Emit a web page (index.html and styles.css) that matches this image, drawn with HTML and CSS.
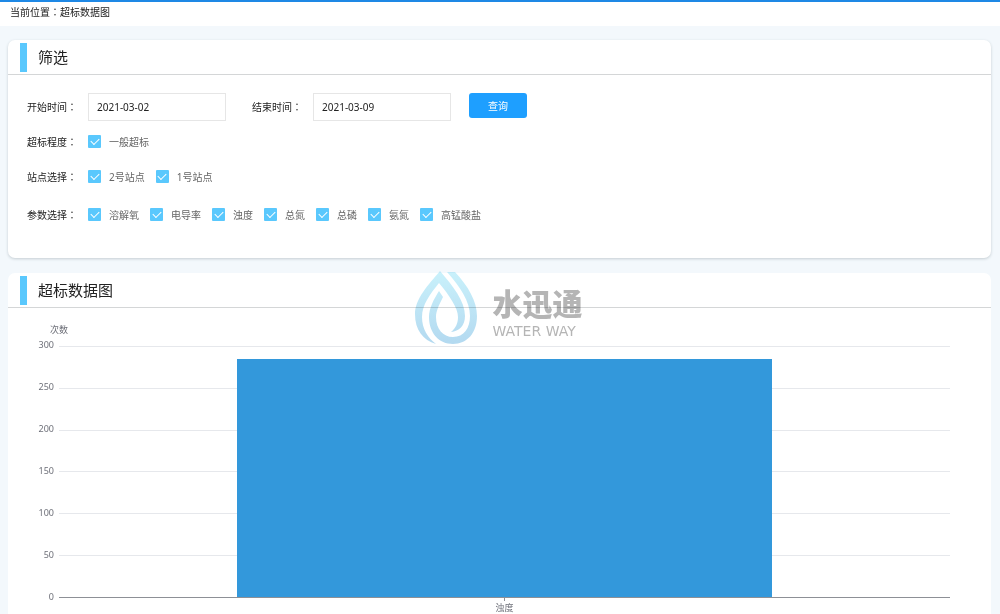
FILE: index.html
```html
<!DOCTYPE html>
<html lang="zh-CN">
<head>
<meta charset="utf-8">
<meta name="viewport" content="width=device-width, initial-scale=1">
<title>超标数据图</title>
<link rel="stylesheet" href="styles.css">
</head>
<body>
<nav class="crumbs">当前位置<span class="colon" lang="zh-Hant">：</span>超标数据图</nav>
<main class="page">
  <section class="card">
    <h2 class="card-title">筛选</h2>
    <form class="filters">
      <div class="row row-dates">
        <label class="name" for="start">开始时间<span class="colon" lang="zh-Hant">：</span></label>
        <input class="date" id="start" type="text" value="2021-03-02">
        <label class="name name-next" for="end">结束时间<span class="colon" lang="zh-Hant">：</span></label>
        <input class="date" id="end" type="text" value="2021-03-09">
        <button class="query" type="button">查询</button>
      </div>
      <div class="row" role="group" aria-labelledby="level">
        <span class="name" id="level">超标程度<span class="colon" lang="zh-Hant">：</span></span>
        <div class="options">
          <label class="option"><input class="check" type="checkbox" checked>一般超标</label>
        </div>
      </div>
      <div class="row" role="group" aria-labelledby="site">
        <span class="name" id="site">站点选择<span class="colon" lang="zh-Hant">：</span></span>
        <div class="options">
          <label class="option"><input class="check" type="checkbox" checked>2号站点</label>
          <label class="option"><input class="check" type="checkbox" checked>1号站点</label>
        </div>
      </div>
      <div class="row row-params" role="group" aria-labelledby="param">
        <span class="name" id="param">参数选择<span class="colon" lang="zh-Hant">：</span></span>
        <div class="options">
          <label class="option"><input class="check" type="checkbox" checked>溶解氧</label>
          <label class="option"><input class="check" type="checkbox" checked>电导率</label>
          <label class="option"><input class="check" type="checkbox" checked>浊度</label>
          <label class="option"><input class="check" type="checkbox" checked>总氮</label>
          <label class="option"><input class="check" type="checkbox" checked>总磷</label>
          <label class="option"><input class="check" type="checkbox" checked>氨氮</label>
          <label class="option"><input class="check" type="checkbox" checked>高锰酸盐</label>
        </div>
      </div>
    </form>
  </section>

  <section class="card card-chart">
    <h2 class="card-title">超标数据图</h2>
    <div class="chart">
      <div class="unit">次数</div>
      <div class="scale">
        <span>300</span><span>250</span><span>200</span><span>150</span><span>100</span><span>50</span><span>0</span>
      </div>
      <div class="plot">
        <div class="lines"><i></i><i></i><i></i><i></i><i></i><i></i></div>
        <div class="bar" style="height: 95%"></div>
      </div>
      <div class="category">浊度</div>
    </div>
    <div class="watermark">
      <svg class="drop" viewBox="0 0 62 74" aria-hidden="true">
        <defs>
          <linearGradient id="water" gradientUnits="userSpaceOnUse" x1="0" y1="0" x2="0" y2="74">
            <stop offset="0" stop-color="#c9f1fb"/>
            <stop offset="1" stop-color="#b3d9f0"/>
          </linearGradient>
        </defs>
        <path fill="url(#water)" d="M25 0C38 15 50 30 50 45C50 55 44 60 36 61C41 57 43 52 43 46C43 37 34 24 24 12C15 23 7 34 7 46C7 58 13 67 21 73C8 69 0 59 0 43C0 28 13 14 25 0Z"/>
        <path fill="url(#water)" d="M32 1H40C53 15 62 30 62 45C62 62 52 73 38 73C24 73 14 62 14 46C14 37 19 28 24 20L28 26C24 34 21 40 21 46C21 58 28 66 38 66C49 66 55 57 55 45C55 30 45 16 32 1Z"/>
      </svg>
      <div class="brand">
        <span class="brand-cn">水迅通</span>
        <span class="brand-en">WATER WAY</span>
      </div>
    </div>
  </section>
</main>
</body>
</html>
```
FILE: styles.css
```css
* {
  box-sizing: border-box;
}

body {
  margin: 0;
  background: #f3f8fc;
  color: #222;
  font: 10px/14px "Noto Sans", "Noto Sans CJK SC", sans-serif;
}

input,
button {
  margin: 0;
  font: inherit;
}

.crumbs {
  height: 26px;
  padding: 3px 10px 0;
  border-top: 2px solid #1e88e5;
  background: #fff;
}

.colon {
  font-family: "Noto Sans CJK TC", sans-serif;
  line-height: 1;
}

.page {
  display: flex;
  flex-direction: column;
  gap: 15px;
  padding: 14px 9px 0 8px;
}

.card {
  position: relative;
  border-radius: 7px;
  background: #fff;
  box-shadow: 0 1px 3px #c4cdd2;
}

.card-chart {
  border-radius: 7px 7px 0 0;
  box-shadow: none;
}

.card-title {
  display: flex;
  align-items: center;
  gap: 11px;
  height: 35px;
  margin: 0;
  padding-left: 12px;
  border-bottom: 1px solid #d4d6d7;
  font-size: 15px;
  font-weight: 400;
  line-height: 22px;
}

.card-title::before {
  content: "";
  width: 7px;
  height: 29px;
  background: #5ac8fd;
}

.filters {
  padding: 18px 19px 26px;
}

.row {
  display: flex;
  align-items: center;
  height: 35px;
}

.row-dates {
  height: 28px;
  margin-bottom: 3px;
}

.row-params {
  margin-top: 3px;
}

.name {
  width: 61px;
}

.name-next {
  margin-left: 26px;
}

.date {
  width: 138px;
  height: 28px;
  padding: 0 8px;
  border: 1px solid #e6e6e6;
  background: #fff;
  color: #222;
}

.query {
  align-self: flex-start;
  width: 58px;
  height: 25px;
  margin-left: 18px;
  padding: 0;
  border: 0;
  border-radius: 3px;
  background: #1e9fff;
  color: #fff;
}

.options {
  display: flex;
  gap: 11px;
}

.option {
  display: flex;
  align-items: center;
  gap: 8px;
  color: #666;
}

.check {
  display: grid;
  place-items: center;
  width: 13px;
  height: 13px;
  border-radius: 1px;
  background: #5ac8fd;
  appearance: none;
}

.check:checked::after {
  content: "";
  width: 7px;
  height: 4px;
  margin-bottom: 2px;
  border: solid #fff;
  border-width: 0 0 1px 1px;
  transform: rotate(-45deg);
}

.chart {
  display: grid;
  grid-template-columns: 46px 1fr;
  column-gap: 5px;
  padding: 15px 41px 0 0;
  color: #6e7079;
  font-size: 9px;
}

.unit {
  grid-column: 1 / -1;
  margin-bottom: 9px;
  padding-left: 42px;
}

.scale {
  display: flex;
  flex-direction: column;
  justify-content: space-between;
  margin: -8px 0 -6px;
  text-align: right;
}

.plot {
  display: grid;
  height: 252px;
  border-bottom: 1px solid #8d9096;
}

.lines,
.bar {
  grid-area: 1 / 1;
}

.lines {
  display: grid;
  grid-auto-rows: 1fr;
}

.lines i {
  border-top: 1px solid #e6e8ec;
}

.bar {
  z-index: 1;
  align-self: end;
  justify-self: center;
  width: 60%;
  background: #3398db;
}

.category {
  grid-column: 2;
  display: flex;
  flex-direction: column;
  align-items: center;
  line-height: 13px;
}

.category::before {
  content: "";
  width: 1px;
  height: 3px;
  background: #8d9096;
}

.watermark {
  position: absolute;
  z-index: 2;
  top: -2px;
  left: 50%;
  display: flex;
  align-items: center;
  gap: 16px;
  transform: translateX(-50%);
  mix-blend-mode: multiply;
}

.drop {
  width: 62px;
  height: 74px;
}

.brand {
  display: flex;
  flex-direction: column;
  min-width: 92px;
  padding-top: 12px;
  color: #b5b5b5;
  white-space: nowrap;
}

.brand-cn {
  font-size: 30px;
  font-weight: 900;
  line-height: 34px;
}

.brand-en {
  font-family: "DejaVu Sans", sans-serif;
  font-size: 14px;
  line-height: 20px;
}
```
